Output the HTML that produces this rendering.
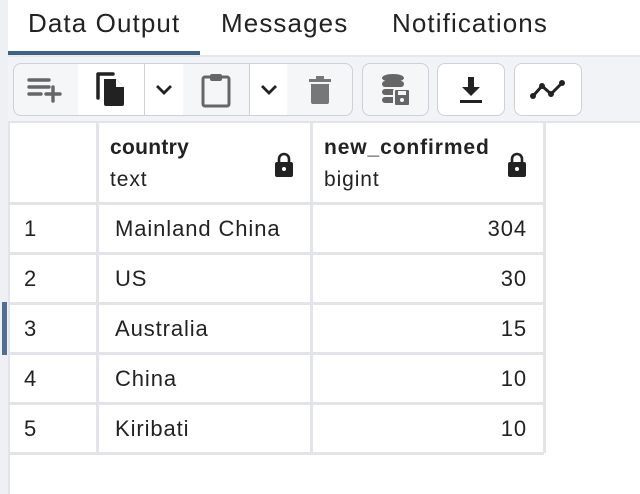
<!DOCTYPE html>
<html><head><style>
*{margin:0;padding:0;box-sizing:border-box}
body{width:640px;height:494px;background:#fff;font-family:"Liberation Sans",sans-serif;position:relative;overflow:hidden;color:#222}
.abs{position:absolute}
.tab{position:absolute;top:8px;font-size:26px;color:#222;letter-spacing:1.1px}
.btn{position:absolute;top:63px;height:53px;border:1.5px solid #cdd0d8;background:#fff;display:flex;align-items:center;justify-content:center}
.g{background:#f5f6f8}
.cell{position:absolute;font-size:22px;color:#222;letter-spacing:0.9px}
.hl{position:absolute;left:8px;width:536px;height:3px;background:#e3e4ea}
.vl{position:absolute;width:3px;background:#e3e4ea}
</style></head><body>
<div class="abs" style="left:0;top:0;width:8px;height:494px;background:#eef0f3"></div>
<div class="tab" style="left:28px">Data Output</div>
<div class="tab" style="left:221px">Messages</div>
<div class="tab" style="left:392px">Notifications</div>
<div class="abs" style="left:8px;top:51px;width:192px;height:4px;background:#3f6287"></div>
<div class="abs" style="left:8px;top:55px;width:632px;height:68px;background:#f2f3f6;border-top:2px solid #e5e7eb;border-bottom:2px solid #e3e4ea"></div>
<div class="btn g" style="left:13px;width:66px;border-radius:8px 0 0 8px">
<svg width="40" height="30" viewBox="0 0 40 30"><g stroke="#666" stroke-width="3.4" stroke-linecap="round"><line x1="3" y1="5" x2="23" y2="5"/><line x1="3" y1="12" x2="23" y2="12"/><line x1="3" y1="19" x2="15" y2="19"/><line x1="20" y1="19" x2="34" y2="19"/><line x1="27" y1="12" x2="27" y2="26"/></g></svg></div>
<div class="btn" style="left:78px;width:67px;border-left:none">
<svg width="34" height="40" viewBox="0 0 34 40"><path d="M4 4 H19 M4 4 V28" stroke="#222" stroke-width="3.5" fill="none" stroke-linecap="round"/><path d="M10 9 H22 L30 17 V34 a2 2 0 0 1 -2 2 H12 a2 2 0 0 1 -2 -2 Z" fill="#222"/><path d="M22 9 V17 H30" fill="#fff"/></svg></div>
<div class="btn" style="left:144px;width:40px;border-left:1.5px solid #cdd0d8">
<svg width="18" height="12" viewBox="0 0 18 12"><path d="M2 2 L9 9 L16 2" stroke="#222" stroke-width="2.8" fill="none"/></svg></div>
<div class="btn g" style="left:183px;width:67px;border-left:none">
<svg width="32" height="38" viewBox="0 0 32 38"><rect x="3" y="6" width="26" height="29" rx="2" fill="none" stroke="#666" stroke-width="3"/><rect x="10" y="3" width="12" height="7" rx="2" fill="#666"/></svg></div>
<div class="btn" style="left:249px;width:39px;border-left:1.5px solid #cdd0d8">
<svg width="18" height="12" viewBox="0 0 18 12"><path d="M2 2 L9 9 L16 2" stroke="#222" stroke-width="2.8" fill="none"/></svg></div>
<div class="btn g" style="left:287px;width:66px;border-left:none;border-radius:0 8px 8px 0">
<svg width="24" height="30" viewBox="0 0 24 30"><rect x="1" y="4" width="22" height="3" fill="#777"/><rect x="8" y="1" width="8" height="4" fill="#777"/><path d="M3 9 H21 V27 a2 2 0 0 1 -2 2 H5 a2 2 0 0 1 -2 -2Z" fill="#777"/></svg></div>
<div class="btn g" style="left:362px;width:67px;border-radius:8px">
<svg width="32" height="34" viewBox="0 0 32 34"><ellipse cx="13" cy="5" rx="11" ry="4" fill="#666"/><rect x="2" y="8" width="22" height="6" rx="3" fill="#666"/><rect x="2" y="16" width="22" height="6" rx="3" fill="#666"/><rect x="2" y="24" width="14" height="6" rx="3" fill="#666"/><rect x="14" y="16" width="16" height="17" rx="2" fill="#666" stroke="#f5f6f8" stroke-width="2"/><rect x="18" y="18" width="8" height="4" fill="#f5f6f8"/><circle cx="22" cy="27" r="2" fill="#f5f6f8"/></svg></div>
<div class="btn" style="left:437px;width:68px;border-radius:8px">
<svg width="26" height="30" viewBox="0 0 26 30"><path d="M10 2 H16 V12 H22 L13 21 L4 12 H10Z" fill="#222"/><rect x="2" y="25" width="22" height="3" fill="#222"/></svg></div>
<div class="btn" style="left:514px;width:68px;border-radius:8px">
<svg width="38" height="24" viewBox="0 0 38 24"><path d="M4 18 L13 8 L22 16 L33 5" stroke="#222" stroke-width="3" fill="none"/><circle cx="4" cy="18" r="3" fill="#222"/><circle cx="13" cy="8" r="3" fill="#222"/><circle cx="22" cy="16" r="3" fill="#222"/><circle cx="33" cy="5" r="3" fill="#222"/></svg></div>
<div class="vl" style="left:8px;top:123px;height:371px;width:2px"></div>
<div class="vl" style="left:96px;top:123px;height:330px"></div>
<div class="vl" style="left:310px;top:123px;height:330px"></div>
<div class="vl" style="left:543px;top:123px;height:330px"></div>
<div class="hl" style="top:202px"></div>
<div class="hl" style="top:252px"></div>
<div class="hl" style="top:302px"></div>
<div class="hl" style="top:352px"></div>
<div class="hl" style="top:402px"></div>
<div class="hl" style="top:452px"></div>
<div class="abs" style="left:2px;top:302px;width:5px;height:53px;background:#4f6f93"></div>
<div class="cell" style="left:110px;top:136px;font-weight:bold;font-size:21px;letter-spacing:0.3px">country</div>
<div class="cell" style="left:110px;top:168px;font-size:21px">text</div>
<div class="cell" style="left:324px;top:136px;font-weight:bold;font-size:21px;letter-spacing:0.9px">new_confirmed</div>
<div class="cell" style="left:324px;top:168px;font-size:21px">bigint</div>
<svg class="abs" style="left:274px;top:152px" width="20" height="26" viewBox="0 0 20 26"><path d="M5 11 V7 a5 5 0 0 1 10 0 V11" stroke="#222" stroke-width="2.6" fill="none"/><rect x="1" y="10" width="18" height="15" rx="2" fill="#222"/><circle cx="10" cy="17" r="2" fill="#fff"/></svg>
<svg class="abs" style="left:507px;top:152px" width="20" height="26" viewBox="0 0 20 26"><path d="M5 11 V7 a5 5 0 0 1 10 0 V11" stroke="#222" stroke-width="2.6" fill="none"/><rect x="1" y="10" width="18" height="15" rx="2" fill="#222"/><circle cx="10" cy="17" r="2" fill="#fff"/></svg>
<div class="cell" style="left:24px;top:216px">1</div><div class="cell" style="left:115px;top:216px">Mainland China</div><div class="cell" style="right:113px;top:216px">304</div>
<div class="cell" style="left:24px;top:266px">2</div><div class="cell" style="left:115px;top:266px">US</div><div class="cell" style="right:113px;top:266px">30</div>
<div class="cell" style="left:24px;top:316px">3</div><div class="cell" style="left:115px;top:316px">Australia</div><div class="cell" style="right:113px;top:316px">15</div>
<div class="cell" style="left:24px;top:366px">4</div><div class="cell" style="left:115px;top:366px">China</div><div class="cell" style="right:113px;top:366px">10</div>
<div class="cell" style="left:24px;top:416px">5</div><div class="cell" style="left:115px;top:416px">Kiribati</div><div class="cell" style="right:113px;top:416px">10</div>
</body></html>
